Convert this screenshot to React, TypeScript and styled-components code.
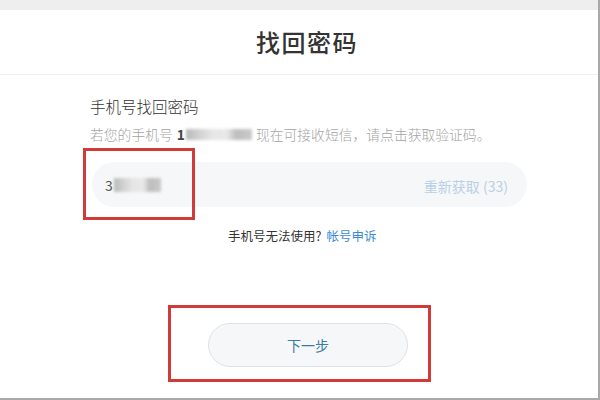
import React from "react";
import styled, { createGlobalStyle } from "styled-components";

const Global = createGlobalStyle`
  html, body { margin: 0; padding: 0; background: #ffffff; }
  body { font-family: "Noto Sans CJK SC", "Noto Sans", "Liberation Sans", sans-serif; }
`;

const Frame = styled.div`
  width: 600px;
  height: 400px;
  box-sizing: border-box;
  border-right: 2px solid #a9a9a9;
  border-bottom: 2px solid #a9a9a9;
  background: #ffffff;
  display: flex;
  flex-direction: column;
  overflow: hidden;
`;

const TopBar = styled.div`
  height: 10px;
  background: #eeeeee;
  flex: none;
`;

const Header = styled.header`
  height: 65px;
  flex: none;
  border-bottom: 1px solid #f0f0f0;
  display: flex;
  align-items: center;
  justify-content: center;
  padding-left: 16px;
  padding-bottom: 2px;
  box-sizing: border-box;
`;

const Title = styled.h1`
  margin: 0;
  font-size: 24px;
  font-weight: 500;
  color: #333333;
  letter-spacing: 1.5px;
`;

const Content = styled.main`
  display: flex;
  flex-direction: column;
  padding: 0 0 0 90px;
`;

const Subtitle = styled.div`
  margin-top: 21px;
  font-size: 15.5px;
  line-height: 20px;
  font-weight: 300;
  color: #333333;
`;

const Desc = styled.div`
  margin-top: 8px;
  font-size: 13.8px;
  line-height: 20px;
  font-weight: 300;
  color: #a3a3a3;
  display: flex;
  align-items: center;
  white-space: nowrap;
`;

const Bold = styled.span`
  font-weight: 700;
  color: #444;
  margin-left: 4px;
`;

const Blur = styled.span<{ $w: number; $h: number }>`
  display: inline-block;
  width: ${(p) => p.$w}px;
  height: ${(p) => p.$h}px;
  background: linear-gradient(
    90deg,
    #b9b9b9 0%,
    #cfcfcf 18%,
    #e6e6e6 40%,
    #e8e8e8 62%,
    #bdbdbd 76%,
    #cacaca 100%
  );
  filter: blur(1.5px);
  margin: 0 4px 0 1px;
`;

const InputWrap = styled.div`
  position: relative;
  margin-top: 18px;
  margin-left: 2px;
  width: 435px;
`;

const Input = styled.div`
  height: 45px;
  border-radius: 23px;
  background: #f6f7f8;
  display: flex;
  align-items: center;
  padding: 0 19px 0 13px;
  box-sizing: border-box;
  font-size: 14px;
  color: #555;
`;

const Resend = styled.span`
  margin-left: auto;
  color: #b9d0e8;
  font-size: 14px;
  margin-top: 2px;
`;

const Mark = styled.div<{ $l: number; $t: number; $w: number; $h: number }>`
  position: absolute;
  left: ${(p) => p.$l}px;
  top: ${(p) => p.$t}px;
  width: ${(p) => p.$w}px;
  height: ${(p) => p.$h}px;
  box-sizing: border-box;
  border: 3px solid #d23a3a;
  pointer-events: none;
`;

const Help = styled.div`
  margin-top: 19px;
  padding-left: 138px;
  font-size: 12.5px;
  line-height: 20px;
  color: #333333;
`;

const Link = styled.a`
  color: #3d8bd6;
  text-decoration: none;
  margin-left: 5px;
`;

const ButtonWrap = styled.div`
  position: relative;
  margin-top: 77px;
  margin-left: 118px;
  width: 200px;
`;

const NextButton = styled.button`
  width: 200px;
  height: 44px;
  border-radius: 22px;
  border: 1px solid #dfe2e5;
  background: #f6f7f8;
  color: #3a7aa3;
  font-family: inherit;
  font-size: 14px;
  cursor: pointer;
  padding: 0;
`;

export default function App() {
  return (
    <>
      <Global />
      <Frame>
        <TopBar />
        <Header>
          <Title>找回密码</Title>
        </Header>
        <Content>
          <Subtitle>手机号找回密码</Subtitle>
          <Desc>
            若您的手机号<Bold>1</Bold>
            <Blur $w={66} $h={11} />
            现在可接收短信，请点击获取验证码。
          </Desc>
          <InputWrap>
            <Input>
              3<Blur $w={47} $h={14} />
              <Resend>重新获取 (33)</Resend>
            </Input>
            <Mark $l={-9} $t={-14} $w={112} $h={72} />
          </InputWrap>
          <Help>
            手机号无法使用?<Link href="#">帐号申诉</Link>
          </Help>
          <ButtonWrap>
            <NextButton>下一步</NextButton>
            <Mark $l={-40} $t={-18} $w={263} $h={77} />
          </ButtonWrap>
        </Content>
      </Frame>
    </>
  );
}
